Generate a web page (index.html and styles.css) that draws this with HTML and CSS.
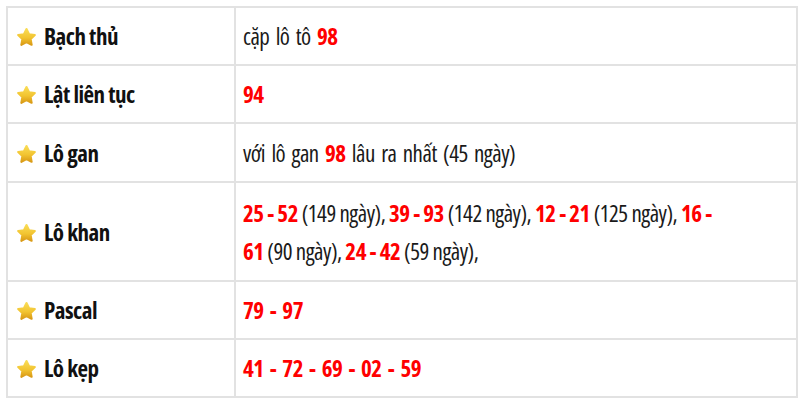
FILE: index.html
```html
<!DOCTYPE html>
<html lang="vi"><head><meta charset="utf-8"><link rel="stylesheet" href="styles.css"></head>
<body>
<svg width="0" height="0" class="defs" aria-hidden="true">
  <defs>
    <linearGradient id="gold" x1="0" y1="0" x2="0" y2="1">
      <stop offset="0" stop-color="#f9dc55"/>
      <stop offset="0.55" stop-color="#f2c431"/>
      <stop offset="1" stop-color="#d99a16"/>
    </linearGradient>
  </defs>
</svg>
<div class="stats">
  <div class="label"><svg class="star" viewBox="0 0 20 20"><path d="M10 1.6 L12.7 7.08 L18.75 7.96 L14.37 12.22 L15.41 18.24 L10 15.4 L4.59 18.24 L5.63 12.22 L1.25 7.96 L7.3 7.08 Z"/></svg><span>Bạch thủ</span></div>
  <div class="value"><p>cặp lô tô <b class="num">98</b></p></div>

  <div class="label"><svg class="star" viewBox="0 0 20 20"><path d="M10 1.6 L12.7 7.08 L18.75 7.96 L14.37 12.22 L15.41 18.24 L10 15.4 L4.59 18.24 L5.63 12.22 L1.25 7.96 L7.3 7.08 Z"/></svg><span>Lật liên tục</span></div>
  <div class="value"><p><b class="num">94</b></p></div>

  <div class="label"><svg class="star" viewBox="0 0 20 20"><path d="M10 1.6 L12.7 7.08 L18.75 7.96 L14.37 12.22 L15.41 18.24 L10 15.4 L4.59 18.24 L5.63 12.22 L1.25 7.96 L7.3 7.08 Z"/></svg><span>Lô gan</span></div>
  <div class="value"><p>với lô gan <b class="num">98</b> lâu ra nhất (45 ngày)</p></div>

  <div class="label"><svg class="star" viewBox="0 0 20 20"><path d="M10 1.6 L12.7 7.08 L18.75 7.96 L14.37 12.22 L15.41 18.24 L10 15.4 L4.59 18.24 L5.63 12.22 L1.25 7.96 L7.3 7.08 Z"/></svg><span>Lô khan</span></div>
  <div class="value"><p class="dense"><b class="num">25 - 52</b> (149 ngày), <b class="num">39 - 93</b> (142 ngày), <b class="num">12 - 21</b> (125 ngày), <b class="num">16 - 61</b> (90 ngày), <b class="num">24 - 42</b> (59 ngày),</p></div>

  <div class="label"><svg class="star" viewBox="0 0 20 20"><path d="M10 1.6 L12.7 7.08 L18.75 7.96 L14.37 12.22 L15.41 18.24 L10 15.4 L4.59 18.24 L5.63 12.22 L1.25 7.96 L7.3 7.08 Z"/></svg><span>Pascal</span></div>
  <div class="value"><p><b class="num">79 - 97</b></p></div>

  <div class="label"><svg class="star" viewBox="0 0 20 20"><path d="M10 1.6 L12.7 7.08 L18.75 7.96 L14.37 12.22 L15.41 18.24 L10 15.4 L4.59 18.24 L5.63 12.22 L1.25 7.96 L7.3 7.08 Z"/></svg><span>Lô kẹp</span></div>
  <div class="value"><p><b class="num">41 - 72 - 69 - 02 - 59</b></p></div>
</div>
</body></html>
```
FILE: styles.css
```css
html, body { margin: 0; background: #fff; }
body { padding: 6px 0 0 6px; }
.defs { position: absolute; }
.stats {
  display: grid;
  grid-template-columns: 228px 562px;
  grid-template-rows: 58px 58px 59px 99px 58px 58px;
  border-top: 2px solid #e2e2e2;
  border-left: 2px solid #e2e2e2;
  width: 790px;
  font-family: "Open Sans", sans-serif;
  font-stretch: 75%;
  font-size: 23px;
  letter-spacing: -0.5px;
  line-height: 38px;
  color: #111;
}
.stats > div {
  border-right: 2px solid #e2e2e2;
  border-bottom: 2px solid #e2e2e2;
  display: flex;
  align-items: center;
}
.label {
  padding-left: 9px;
  gap: 8px;
  font-weight: 700;
}
.star { width: 19px; height: 20px; flex: none; margin-top: 2px; }
.star path { fill: url(#gold); stroke: url(#gold); stroke-width: 2.2; stroke-linejoin: round; }
.value { padding: 0 80px 0 7px; color: #1a1a1a; }
.value p { margin: 0; word-spacing: 2.5px; }
.value p.dense { word-spacing: 0; }
.num { color: #ff0000; font-weight: 700; }
```
